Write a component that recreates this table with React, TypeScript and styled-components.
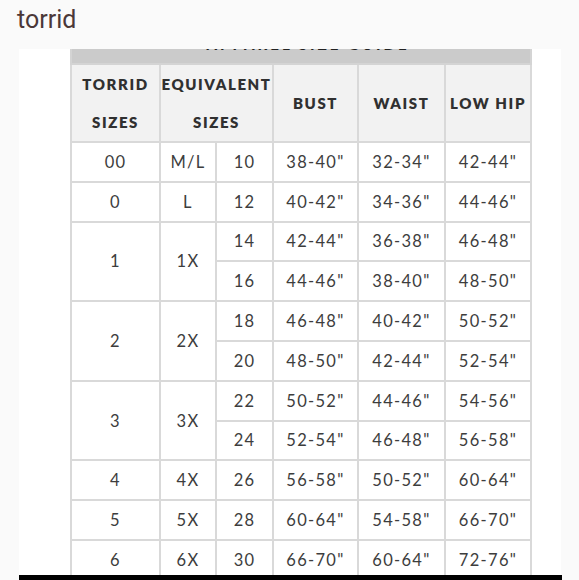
import React from 'react';
import styled, { createGlobalStyle } from 'styled-components';

const GlobalStyle = createGlobalStyle`
    body {
        margin: 0;
        background: #fafafa;
        font-family: Roboto, "Liberation Sans", sans-serif;
    }
`

const Page = styled.div`
    width: 579px;
    height: 580px;
    overflow: hidden;
`

const Brand = styled.div`
    height: 49px;
    padding-left: 17px;
    font-size: 25px;
    line-height: 39px;
    color: #4b3838;
`

const Photo = styled.div`
    margin-left: 19px;
    width: 542px;
    height: 526px;
    background: #ffffff;
    padding-left: 51px;
    box-sizing: border-box;
    overflow: hidden;
`

const BlackEdge = styled.div`
    margin-left: 19px;
    width: 543px;
    height: 5px;
    background: #000;
`

const Chart = styled.table`
    border-collapse: collapse;
    table-layout: fixed;
    width: 460px;
    font-family: Lato, "DejaVu Sans", sans-serif;
    color: #3d3d3d;
`

const TitleCell = styled.td`
    padding: 0;
    background: #cbcbcb;
    border: 2px solid #d4d4d4;
    border-top: none;
`

const TitleClip = styled.div`
    height: 14px;
    overflow: hidden;
    text-align: center;
    font-weight: 900;
    font-size: 15px;
    letter-spacing: 3px;
    color: #222;
    line-height: 8px;
    span {
        position: relative;
        top: -9px;
        padding-left: 14px;
    }
`

const Head = styled.th<{ $stack?: boolean }>`
    background: #f2f2f2;
    border: 2px solid #d9d9d9;
    height: 75px;
    padding: 0;
    font-size: 15px;
    font-weight: 800;
    letter-spacing: 1.6px;
    color: #303030;
    line-height: ${(p) => (p.$stack ? '38px' : '20px')};
    white-space: nowrap;
`

const Cell = styled.td`
    border: 2px solid #d9d9d9;
    height: 37.8px;
    padding: 0;
    text-align: center;
    font-size: 16.5px;
    letter-spacing: 1.3px;
`

type Row = string[];

const rows: { torrid?: string; eq?: string; span?: number; cells: Row }[] = [
    { torrid: '00', eq: 'M/L', cells: ['10', '38-40"', '32-34"', '42-44"'] },
    { torrid: '0', eq: 'L', cells: ['12', '40-42"', '34-36"', '44-46"'] },
    { torrid: '1', eq: '1X', span: 2, cells: ['14', '42-44"', '36-38"', '46-48"'] },
    { cells: ['16', '44-46"', '38-40"', '48-50"'] },
    { torrid: '2', eq: '2X', span: 2, cells: ['18', '46-48"', '40-42"', '50-52"'] },
    { cells: ['20', '48-50"', '42-44"', '52-54"'] },
    { torrid: '3', eq: '3X', span: 2, cells: ['22', '50-52"', '44-46"', '54-56"'] },
    { cells: ['24', '52-54"', '46-48"', '56-58"'] },
    { torrid: '4', eq: '4X', cells: ['26', '56-58"', '50-52"', '60-64"'] },
    { torrid: '5', eq: '5X', cells: ['28', '60-64"', '54-58"', '66-70"'] },
    { torrid: '6', eq: '6X', cells: ['30', '66-70"', '60-64"', '72-76"'] },
]

function App() {
    return (
        <Page>
            <GlobalStyle />
            <Brand>torrid</Brand>
            <Photo>
                <Chart>
                    <colgroup>
                        <col style={{ width: 89 }} />
                        <col style={{ width: 56 }} />
                        <col style={{ width: 57 }} />
                        <col style={{ width: 85 }} />
                        <col style={{ width: 87 }} />
                        <col style={{ width: 86 }} />
                    </colgroup>
                    <tbody>
                        <tr>
                            <TitleCell colSpan={6}>
                                <TitleClip><span>APPAREL SIZE GUIDE</span></TitleClip>
                            </TitleCell>
                        </tr>
                        <tr>
                            <Head $stack>TORRID<br />SIZES</Head>
                            <Head $stack colSpan={2}>EQUIVALENT<br />SIZES</Head>
                            <Head>BUST</Head>
                            <Head>WAIST</Head>
                            <Head>LOW HIP</Head>
                        </tr>
                        {rows.map((row, index) => (
                            <tr key={index}>
                                {row.torrid !== undefined && <Cell rowSpan={row.span}>{row.torrid}</Cell>}
                                {row.eq !== undefined && <Cell rowSpan={row.span}>{row.eq}</Cell>}
                                {row.cells.map((c, i) => (
                                    <Cell key={i}>{c}</Cell>
                                ))}
                            </tr>
                        ))}
                    </tbody>
                </Chart>
            </Photo>
            <BlackEdge />
        </Page>
    );
}

export default App;
